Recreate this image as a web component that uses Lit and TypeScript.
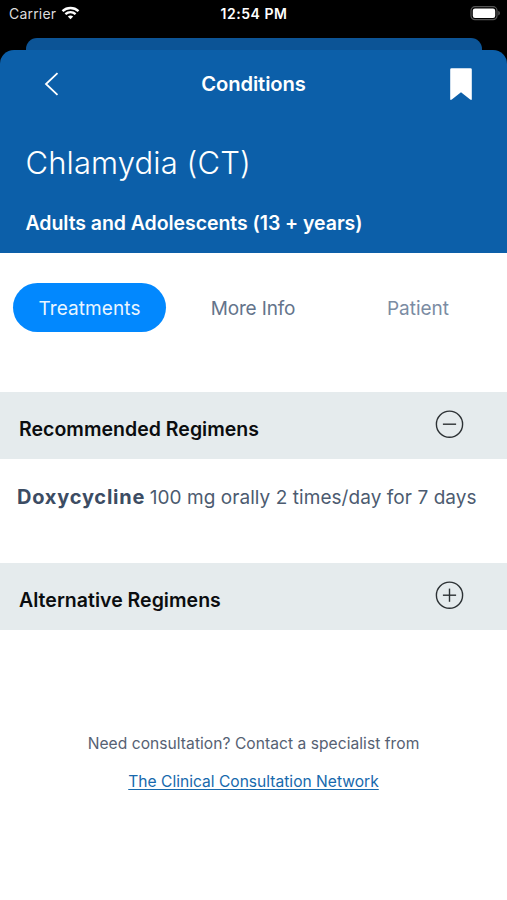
import { LitElement, html, css, svg } from "lit";
import { customElement, property } from "lit/decorators.js";

@customElement("status-bar")
class StatusBar extends LitElement {
  static styles = css`
    :host { display: grid; grid-template-columns: 1fr auto 1fr; align-items: center; height: 28px; padding: 0 7px 0 9px; color: #fff; font-size: 14px; line-height: 28px; box-sizing: border-box; }
    .carrier { display: flex; align-items: center; gap: 5px; color: #dcdcdc; letter-spacing: 0.2px; }
    .carrier span, .time { height: 28px; }
    .time { font-weight: 600; letter-spacing: 0.55px; margin-right: 1px; }
    .battery { justify-self: end; }
    svg { display: block; }
  `;
  render() {
    return html`
      <div class="carrier"><span>Carrier</span>
        <svg width="19" height="16" viewBox="0 0 18 16" fill="none" stroke="#fff" stroke-width="2.4">
          <path d="M1 5.1C5.6.9 12.4.9 17 5.1"/><path d="M3.9 8.2c3-2.7 7.2-2.7 10.2 0"/><path d="M9 13.2 6.3 10.5c1.6-1.4 3.8-1.4 5.4 0z" fill="#fff" stroke="none"/>
        </svg>
      </div>
      <div class="time">12:54 PM</div>
      <svg class="battery" width="30" height="16" viewBox="0 0 30 16">
        <rect x="1" y=".7" width="26" height="13" rx="4" fill="none" stroke="#555" stroke-width="1.2"/>
        <rect x="2.8" y="2.5" width="22.4" height="9.4" rx="2.2" fill="#fff"/>
        <path d="M28.4 5c1.8.6 1.8 3.8 0 4.4z" fill="#666"/>
      </svg>`;
  }
}

@customElement("regimen-bar")
class RegimenBar extends LitElement {
  @property() label = "";
  @property({ type: Boolean }) open = false;
  static styles = css`
    :host { display: flex; justify-content: space-between; height: 67px; padding: 0 43px 0 19px; background: #e5ebed; box-sizing: border-box; }
    .label { color: #0b0d0f; font-size: 19.5px; font-weight: 600; line-height: 74px; letter-spacing: 0.02px; white-space: nowrap; }
    svg { display: block; margin-top: 18px; }
  `;
  render() {
    return html`<span class="label">${this.label}</span>
      <svg width="29" height="29" viewBox="0 0 29 29" fill="none" stroke="#2c3134" stroke-width="1.4">
        <circle cx="14.5" cy="14.2" r="13.1"/><path d="M7.9 14.2h13.2"/>
        ${this.open ? null : svg`<path d="M14.5 7.6v13.2"/>`}
      </svg>`;
  }
}

@customElement("app-root")
class AppRoot extends LitElement {
  static styles = css`
    :host { display: block; height: 900px; background: #fff; overflow: hidden; font-family: Inter, "Noto Sans", sans-serif; }
    .top { background: #000; }
    .behind { height: 12px; margin: 10px 25px 0 26px; border-radius: 11px 11px 0 0; background: #0c5496; }
    .header { height: 202.5px; border-radius: 14px 14px 0 0; background: #0c5fa9; color: #fff; }
    .nav { display: grid; grid-template-columns: 1fr auto 1fr; align-items: center; height: 68px; padding: 0 35px; }
    .back { margin-left: 9px; }
    .nav-title { font-size: 20.2px; font-weight: 600; letter-spacing: -0.1px; line-height: 24px; }
    .mark { justify-self: end; }
    svg { display: block; }
    h1, h2, p { margin: 0; white-space: nowrap; }
    h1 { padding-left: 25.5px; font-size: 31px; font-weight: 300; line-height: 90px; letter-spacing: 0.12px; }
    h2 { padding-left: 25.5px; font-size: 19.5px; font-weight: 600; line-height: 30px; letter-spacing: -0.06px; }
    .tabs { display: flex; align-items: flex-start; height: 49px; padding: 0 13px; margin-top: 30.5px; font-size: 19px; color: #64748b; }
    .tab { flex: none; height: 49px; line-height: 51px; text-align: center; }
    .tab.active { width: 153px; border-radius: 25px; background: #0288fe; color: #e9f5ff; letter-spacing: 0.1px; }
    .tab.info { width: 174px; letter-spacing: -0.15px; }
    .tab.patient { width: 156px; color: #7b8ca3; }
    .first { margin-top: 60px; }
    .dose { height: 104px; padding-left: 17px; color: #4c5b70; font-size: 19px; line-height: 77px; letter-spacing: 0.06px; }
    .dose b { font-size: 20px; font-weight: 700; color: #3c4c63; letter-spacing: 0.78px; }
    .amount { margin-left: -1px; }
    .consult { padding-top: 95px; color: #566173; font-size: 15.6px; line-height: 38px; text-align: center; }
    .consult p:first-child { letter-spacing: 0.04px; }
    .consult a { color: #1769ad; text-decoration: underline; text-underline-offset: 2px; }
  `;
  render() {
    return html`
      <div class="top">
        <status-bar></status-bar>
        <div class="behind"></div>
        <div class="header">
          <div class="nav">
            <svg class="back" width="15" height="24" viewBox="0 0 15 24" fill="none" stroke="#fff" stroke-width="1.8"><path d="M13.5 1.2 2 12l11.5 10.8"/></svg>
            <span class="nav-title">Conditions</span>
            <svg class="mark" width="22" height="33" viewBox="0 0 22 33"><path d="M1.5.2h19a1.3 1.3 0 0 1 1.3 1.3v29.4q0 1.8-1.6.6L11 24.3l-9.2 7.2q-1.6 1.2-1.6-.6V1.5A1.3 1.3 0 0 1 1.5.2z" fill="#fff"/></svg>
          </div>
          <h1>Chlamydia (CT)</h1>
          <h2>Adults and Adolescents (13 + years)</h2>
        </div>
      </div>
      <div class="tabs">
        <div class="tab active">Treatments</div>
        <div class="tab info">More Info</div>
        <div class="tab patient">Patient</div>
      </div>
      <regimen-bar class="first" label="Recommended Regimens" open></regimen-bar>
      <p class="dose"><b>Doxycycline</b> <span class="amount">100 mg orally 2 times/day for 7 days</span></p>
      <regimen-bar label="Alternative Regimens"></regimen-bar>
      <div class="consult"><p>Need consultation? Contact a specialist from</p><p><a>The Clinical Consultation Network</a></p></div>`;
  }
}
